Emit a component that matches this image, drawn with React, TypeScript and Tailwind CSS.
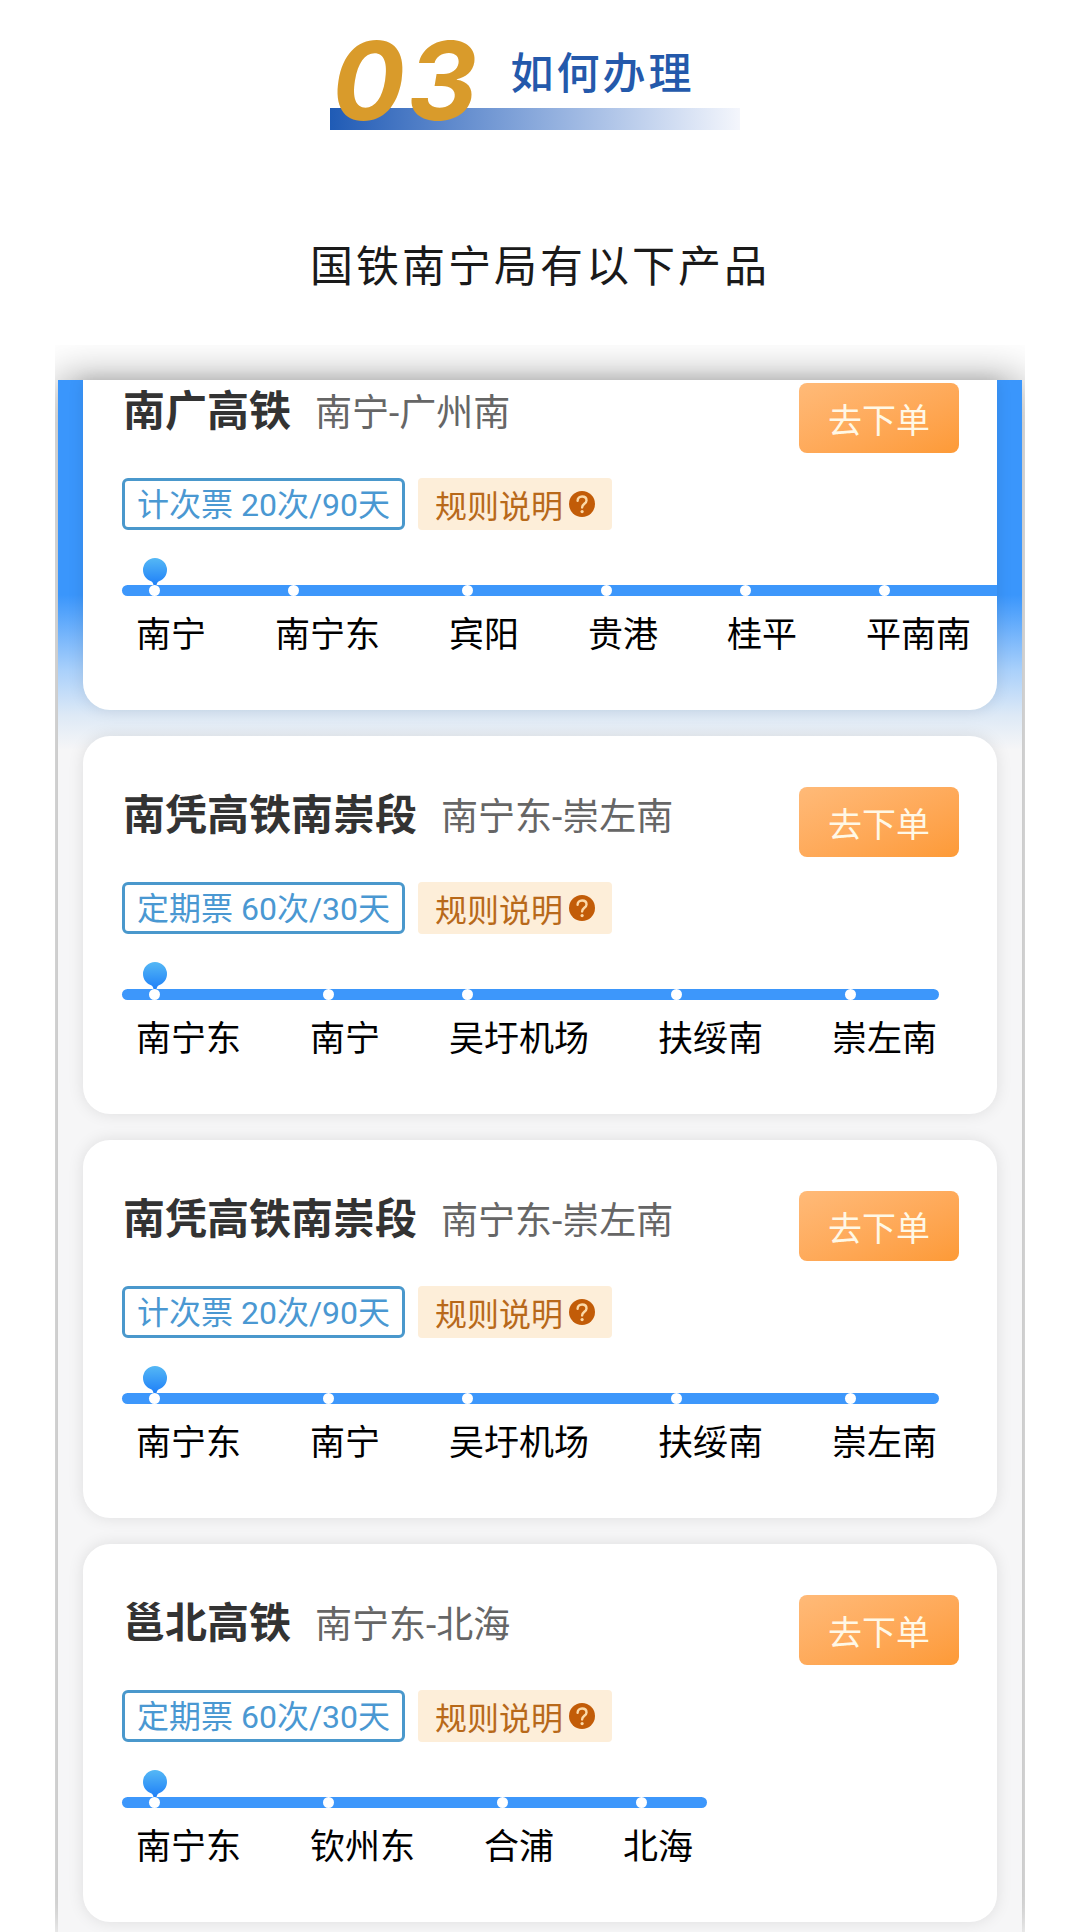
type Product = {
  id: number;
  name: string;
  route: string;
  ticket: string;
  stations: string[];
  // line runs on past the edge of the card
  through?: boolean;
};

const products: Product[] = [
  {
    id: 1,
    name: "南广高铁",
    route: "南宁-广州南",
    ticket: "计次票 20次/90天",
    stations: ["南宁", "南宁东", "宾阳", "贵港", "桂平", "平南南"],
    through: true
  },
  {
    id: 2,
    name: "南凭高铁南崇段",
    route: "南宁东-崇左南",
    ticket: "定期票 60次/30天",
    stations: ["南宁东", "南宁", "吴圩机场", "扶绥南", "崇左南"]
  },
  {
    id: 3,
    name: "南凭高铁南崇段",
    route: "南宁东-崇左南",
    ticket: "计次票 20次/90天",
    stations: ["南宁东", "南宁", "吴圩机场", "扶绥南", "崇左南"]
  },
  {
    id: 4,
    name: "邕北高铁",
    route: "南宁东-北海",
    ticket: "定期票 60次/30天",
    stations: ["南宁东", "钦州东", "合浦", "北海"]
  }
];

function QuestionIcon() {
  return (
    <svg viewBox="0 0 26 26" className="size-[26px]" fill="none" aria-hidden="true">
      <circle cx="13" cy="13" r="13" fill="#c25c08" />
      <path
        d="M8.600 9.800c0-2.600 1.900-4.300 4.500-4.300s4.400 1.600 4.400 3.900c0 3.300-4.400 3.500-4.400 7"
        stroke="#fbd9a8"
        strokeWidth="2.400"
        strokeLinecap="round"
      />
      <circle cx="13.100" cy="20.600" r="1.600" fill="#fbd9a8" />
    </svg>
  );
}

function PinIcon() {
  return (
    <svg viewBox="0 0 24 28" className="ml-[21px] block h-7 w-6" aria-hidden="true">
      <defs>
        <linearGradient id="pin" x1="0" y1="0" x2="0" y2="1">
          <stop offset="0" stopColor="#55b8f5" />
          <stop offset="1" stopColor="#1f80f8" />
        </linearGradient>
      </defs>
      <path
        d="M12 1a12 12 0 0 1 12 12c0 5-3 9-7.500 11-1.500.7-2.500 1.600-3 4h-3c-.5-2.400-1.500-3.300-3-4C3 22 0 18 0 13A12 12 0 0 1 12 1z"
        fill="url(#pin)"
      />
    </svg>
  );
}

function Line({ stations, through }: { stations: string[]; through?: boolean }) {
  return (
    <div className={through ? "-mr-[38px]" : "w-max max-w-[817px]"}>
      <PinIcon />
      <div className="grid">
        <div
          className={
            through
              ? "col-start-1 row-start-1 h-[11px] rounded-l-full bg-[#3d97fb]"
              : "col-start-1 row-start-1 h-[11px] rounded-full bg-[#3d97fb]"
          }
        />
        <ol className="col-start-1 row-start-1 flex min-w-0 gap-[69px] pr-[14px] pl-[14px]">
          {stations.map((s) => (
            <li key={s} className="shrink-0 whitespace-nowrap">
              <span className="ml-[13px] block size-[11px] rounded-full bg-white" />
              <span className="mt-[18px] block text-[35px] leading-[44px] text-black">{s}</span>
            </li>
          ))}
        </ol>
      </div>
    </div>
  );
}

function ProductCard({ product, first }: { product: Product; first: boolean }) {
  return (
    <article
      className={
        first
          ? "overflow-hidden rounded-b-[27px] bg-white pt-[3px] pr-[38px] pb-[52px] pl-[39px] shadow-[0_0_16px_rgba(0,0,0,0.1)]"
          : "overflow-hidden rounded-[27px] bg-white pt-[51px] pr-[38px] pb-[52px] pl-[39px] shadow-[0_0_16px_rgba(0,0,0,0.1)]"
      }
    >
      <div className="flex items-start justify-between">
        <div className="flex items-baseline gap-6 pl-px">
          <h3 className="text-[42px] leading-[58px] font-bold text-[#333]">{product.name}</h3>
          <span className="text-[37px] leading-[58px] text-[#666]">{product.route}</span>
        </div>
        <button
          type="button"
          className="h-[70px] w-[160px] rounded-lg bg-linear-to-br from-[#ffba78] to-[#fd9a36] pt-[6px] text-[34px] text-[#fff8e6]"
        >
          去下单
        </button>
      </div>

      <div className="mt-[25px] flex gap-[13px]">
        <span className="flex h-[52px] items-center rounded-md border-[3px] border-[#4a98cc] px-3 pt-[2px] text-[32px] leading-none text-[#4a98d2]">
          {product.ticket}
        </span>
        <button
          type="button"
          className="flex h-[52px] items-center gap-[6px] rounded-sm bg-[#fdeed9] px-[17px] text-[32px] leading-none text-[#b8691a]"
        >
          <span className="pt-[6px]">规则说明</span>
          <QuestionIcon />
        </button>
      </div>

      <div className="mt-[27px]">
        <Line stations={product.stations} through={product.through} />
      </div>
    </article>
  );
}

export default function App() {
  return (
    <main className="min-h-screen bg-white font-[Roboto,'Noto_Sans_CJK_SC',sans-serif]">
      <header className="flex flex-col items-center pt-7">
        <div className="mr-[10px] grid w-[410px]">
          <div className="col-start-1 row-start-1 h-[22px] self-end bg-linear-to-r from-[#1f5bb5] to-[#f4f6fc]" />
          <div className="col-start-1 row-start-1 flex h-[102px] items-start">
            <span className="pl-[2px] font-[Inter,sans-serif] text-[108px] leading-[106px] font-bold tracking-[3px] text-[#d99b2b] italic">
              03
            </span>
            <h2 className="ml-[30px] pt-[18px] text-[43px] leading-[56px] font-medium tracking-[3px] text-[#2459ab]">
              如何办理
            </h2>
          </div>
        </div>
        <p className="mt-[104px] text-[43px] leading-[66px] tracking-[3px] text-[#1a1a1a]">
          国铁南宁局有以下产品
        </p>
      </header>

      <div className="mx-[55px] mt-[45px] overflow-hidden pt-[35px]">
        <section className="mx-[3px] flex flex-col gap-[26px] bg-[#f6f6f7] bg-[linear-gradient(#3a96fc_0px,#3a96fc_215px,#a9d0fb_290px,#dde9f6_335px,#f6f6f7_370px)] px-[25px] pb-[10px] shadow-[0_0_40px_rgba(0,0,0,0.4)]">
          {products.map((p, i) => (
            <ProductCard key={p.id} product={p} first={i === 0} />
          ))}
        </section>
      </div>
    </main>
  );
}
